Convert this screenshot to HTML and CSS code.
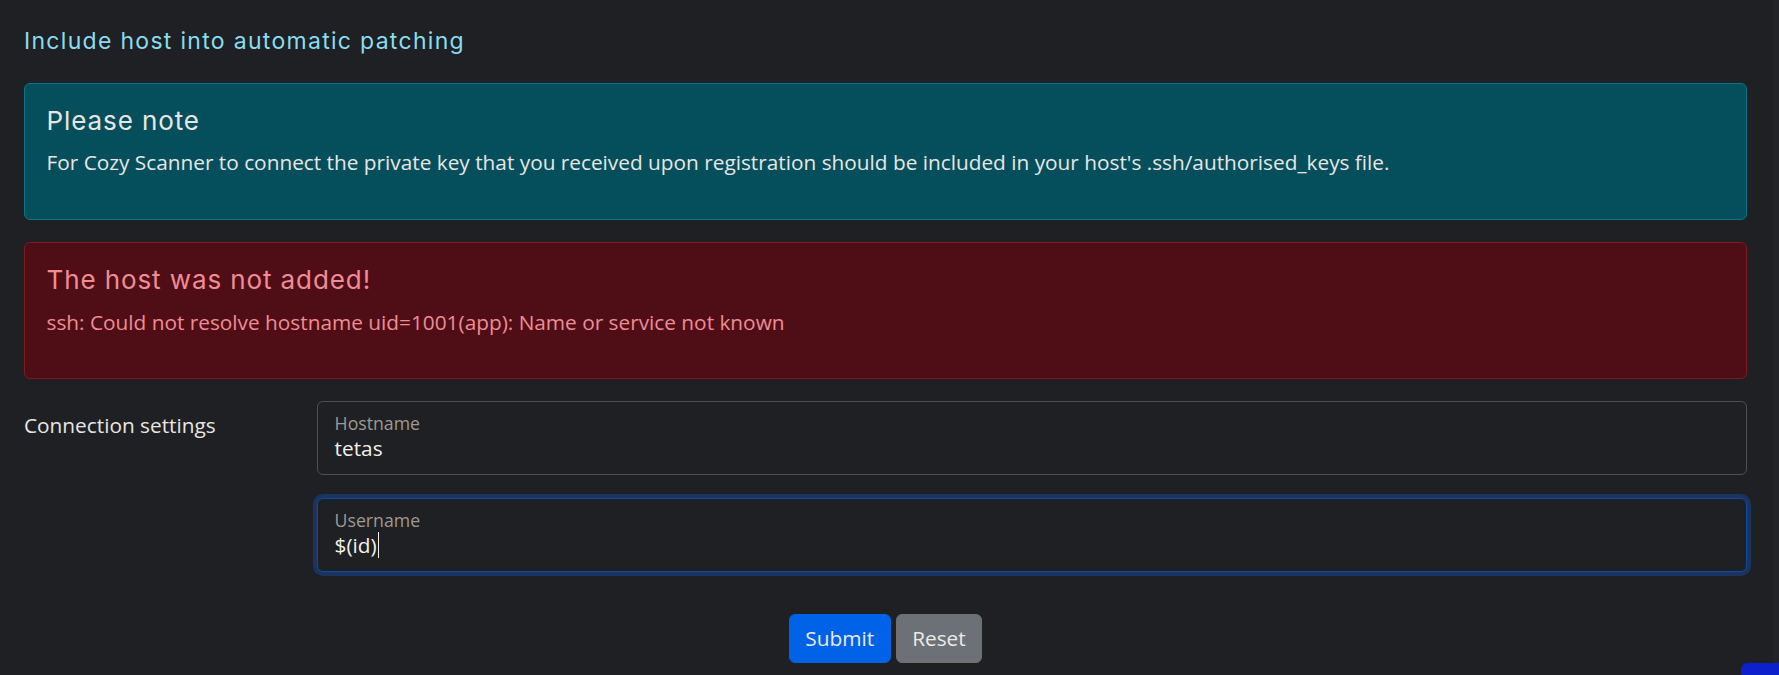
FILE: index.html
```html
<!DOCTYPE html>
<html lang="en">
<head>
<meta charset="utf-8">
<title>Include host into automatic patching</title>
<link rel="stylesheet" href="styles.css">
</head>
<body>
<main class="page">
  <h5 class="title">Include host into automatic patching</h5>

  <div class="alert alert-info">
    <h4 class="alert-heading">Please note</h4>
    <p>For Cozy Scanner to connect the private key that you received upon registration should be included in your host's .ssh/authorised_keys file.</p>
  </div>

  <div class="alert alert-danger">
    <h4 class="alert-heading">The host was not added!</h4>
    <p>ssh: Could not resolve hostname uid=1001(app): Name or service not known</p>
  </div>

  <form class="form">
    <div class="form-row">
      <div class="col-label">Connection settings</div>
      <div class="fields">
        <div class="field">
          <span class="field-label">Hostname</span>
          <span class="field-value">tetas</span>
        </div>
        <div class="field field-focus">
          <span class="field-label">Username</span>
          <span class="field-value">$(id)<span class="caret"></span></span>
        </div>
      </div>
    </div>
    <div class="actions">
      <button type="button" class="btn btn-primary">Submit</button>
      <button type="button" class="btn btn-secondary">Reset</button>
    </div>
  </form>
</main>
<div class="corner-widget"></div>
</body>
</html>
```
FILE: styles.css
```css
html, body {
  margin: 0;
  padding: 0;
}
body {
  background: #1f2023;
  color: #e8e6e3;
  font-family: "Open Sans", "Noto Sans", sans-serif;
  font-size: 20.8px;
  line-height: 1.5;
  height: 675px;
  overflow: hidden;
  border-right: 6px solid #222429;
  box-sizing: border-box;
}
.page {
  padding: 27.5px 26px 0 24px;
}
.title {
  margin: 0 0 27.7px;
  font-family: "Inter", "Noto Sans", sans-serif;
  font-weight: 400;
  font-size: 23px;
  letter-spacing: 1.3px;
  line-height: 27.6px;
  color: #88ddf1;
}
.alert {
  border: 1px solid;
  border-radius: 6px;
  padding: 21px 21.5px 21px;
  margin-bottom: 21.7px;
}
.alert p {
  margin: 0 0 19.5px;
  line-height: 31.2px;
}
.alert-heading {
  margin: 0 0 11.5px;
  font-family: "Inter", "Noto Sans", sans-serif;
  font-weight: 400;
  font-size: 26px;
  letter-spacing: 0.9px;
  line-height: 31.2px;
}
.alert-info {
  background: #054f5c;
  border-color: #0a7488;
  color: #e8e6e3;
}
.alert-danger {
  background: #4f0e15;
  border-color: #7e1a24;
  color: #ef8c95;
}
.form {
  margin-top: 0.8px;
}
.form-row {
  display: grid;
  grid-template-columns: 292.6px 1fr;
}
.col-label {
  padding-top: 9.5px;
  line-height: 31.2px;
}
.fields {
  display: flex;
  flex-direction: column;
  gap: 22.5px;
}
.field {
  display: flex;
  flex-direction: column;
  border: 1px solid #4c4f54;
  border-radius: 6px;
  padding: 11.5px 17px 13px;
  background: #1f2023;
}
.field-label {
  font-size: 17.7px;
  line-height: 20px;
  margin-bottom: 2px;
  color: #9c9a94;
}
.field-value {
  font-size: 20.8px;
  line-height: 26px;
  color: #f2f0ec;
  display: flex;
  align-items: center;
}
.field-focus {
  border-color: #0e4a9c;
  box-shadow: 0 0 0 4px #1b3360;
}
.caret {
  display: inline-block;
  width: 1.5px;
  height: 26px;
  margin-left: 1px;
  background: #f2f0ec;
}
.actions {
  margin-top: 41.8px;
  display: flex;
  justify-content: center;
  gap: 5.3px;
}
.btn {
  font-family: "Open Sans", "Noto Sans", sans-serif;
  font-size: 20.8px;
  line-height: 31.2px;
  padding: 8px 15.4px;
  border: 1px solid transparent;
  border-radius: 6px;
  color: #eceae6;
  cursor: pointer;
}
.btn-primary {
  background: #0062e6;
  border-color: #0062e6;
}
.btn-secondary {
  background: #6b7176;
  border-color: #756e68;
}
.corner-widget {
  position: fixed;
  right: 0;
  bottom: -30px;
  width: 38px;
  height: 42px;
  background: #0c20cc;
  border-top-left-radius: 6px;
}
```
